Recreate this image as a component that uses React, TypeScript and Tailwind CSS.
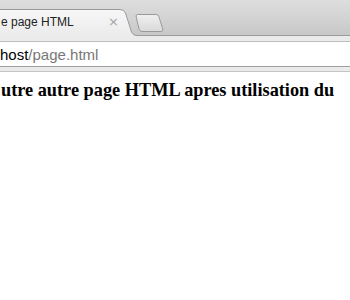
import React from "react";

export default function App() {
  return (
    <div className="w-[350px] h-[300px] overflow-hidden bg-white flex flex-col">
      {/* Tab strip */}
      <div className="h-[36px] shrink-0 flex items-end bg-gradient-to-b from-[#dedede] to-[#c8c8c8] border-b border-[#9c9c9c] relative">
        <div className="relative w-[138px] h-[27px] -mb-px">
          <svg className="absolute inset-0" width="138" height="27" viewBox="0 0 138 27">
            <defs>
              <linearGradient id="tabFill" x1="0" y1="0" x2="0" y2="1">
                <stop offset="0" stopColor="#f7f7f7" />
                <stop offset="1" stopColor="#ebebeb" />
              </linearGradient>
            </defs>
            <path
              d="M-2 27 L-2 0.5 L120 0.5 Q124 0.5 125.5 4 L131.5 23 Q133 26.5 137 26.5 L138 27 Z"
              fill="url(#tabFill)"
            />
            <path
              d="M-2 0.5 L120 0.5 Q124 0.5 125.5 4 L131.5 23 Q133 26.5 137 26.5 L138 26.5"
              fill="none"
              stroke="#9a9a9a"
              strokeWidth="1"
            />
          </svg>
          <div className="relative flex items-center h-full pb-[2px] pl-[1px] pr-[19px]">
            <span className="text-[12px] text-[#222] font-['Liberation_Sans','Lucida_Grande',sans-serif] leading-none">
              e page HTML
            </span>
            <span className="ml-auto text-[13px] leading-none text-[#a4a4a4] font-['DejaVu_Sans',sans-serif]">
              ×
            </span>
          </div>
        </div>
        <svg className="mb-[3px] -ml-[3px]" width="30" height="18" viewBox="0 0 30 18">
          <defs>
            <linearGradient id="ntFill" x1="0" y1="0" x2="0" y2="1">
              <stop offset="0" stopColor="#f0f0f0" />
              <stop offset="1" stopColor="#d9d9d9" />
            </linearGradient>
          </defs>
          <path
            d="M2.5 0.5 L21 0.5 Q23 0.5 23.8 2.5 L27.8 15 Q28.3 17.5 26 17.5 L7 17.5 Q5 17.5 4.2 15.5 L1.2 3 Q0.7 0.5 2.5 0.5 Z"
            fill="url(#ntFill)"
            stroke="#9a9a9a"
            strokeWidth="1"
          />
        </svg>
      </div>

      {/* Toolbar */}
      <div className="shrink-0 bg-[#ebebeb] pt-[5px] border-b border-[#c4c4c4]">
        <div className="h-[26px] bg-white border-t border-[#bdbdbd] border-b border-b-[#9e9e9e] flex items-center -mx-2 px-2">
          <span className="text-[15px] leading-none font-['Liberation_Sans','Lucida_Grande',sans-serif] pt-[1px]">
            <span className="text-black">host</span>
            <span className="text-[#777]">/page.html</span>
          </span>
        </div>
        <div className="h-[4px]" />
      </div>

      {/* Page content */}
      <div className="flex-1 bg-white pt-[7px]">
        <h1 className="font-['Liberation_Serif','Times_New_Roman',serif] font-bold text-[18.3px] leading-[22px] text-black whitespace-nowrap pl-[1px]">
          utre autre page HTML apres utilisation du
        </h1>
      </div>
    </div>
  );
}
